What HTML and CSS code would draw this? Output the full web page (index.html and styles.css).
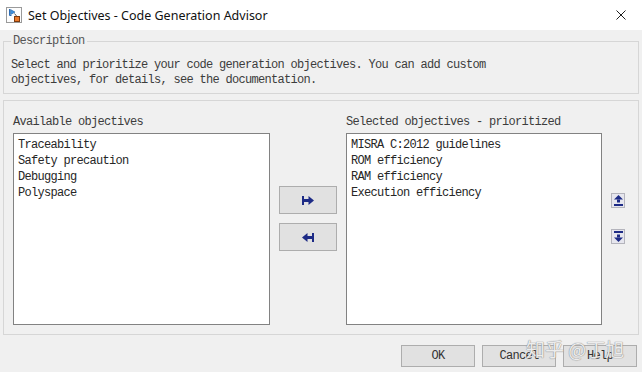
FILE: index.html
```html
<!DOCTYPE html>
<html lang="en">
<head>
  <meta charset="UTF-8" />
  <meta name="viewport" content="width=device-width, initial-scale=1.0"/>
  <title>Set Objectives - Code Generation Advisor</title>
  <link rel="stylesheet" href="styles.css">
</head>
<body>

  <div class="window">
    <div class="titlebar">
      <svg class="app-icon" viewBox="0 0 16 16" width="16" height="16">
        <rect x="0.5" y="0.5" width="15" height="15" fill="#fdfdfd" stroke="#9a9a9a"/>
        <path d="M3.5 2v6.5h2" stroke="#2f6db5" fill="none"/>
        <path d="M4.5 2.5l4.5 2.6-4.5 2.6z" fill="#3d8fdc" stroke="#1f5c9c" stroke-width="0.6"/>
        <path d="M8.5 6.5l2 2.5" stroke="#555" fill="none"/>
        <rect x="8.5" y="9.5" width="5" height="5" fill="#ec7a2a" stroke="#7d3a0e"/>
      </svg>
      <span class="title">Set Objectives - Code Generation Advisor</span>
      <svg class="close" viewBox="0 0 10 10" width="10" height="10">
        <path d="M0.5 0.5l9 9M9.5 0.5l-9 9" stroke="#1e1e1e" stroke-width="1"/>
      </svg>
    </div>

    <div class="content">
      <fieldset class="group desc">
        <legend>Description</legend>
        <p>Select and prioritize your code generation objectives. You can add custom<br>objectives, for details, see the documentation.</p>
      </fieldset>

      <div class="group panel">
        <div class="label">Available objectives</div>
        <div class="label right-label">Selected objectives - prioritized</div>

        <ul class="list">
          <li>Traceability</li>
          <li>Safety precaution</li>
          <li>Debugging</li>
          <li>Polyspace</li>
        </ul>

        <div class="move">
          <button class="btn move-btn">
            <svg viewBox="0 0 12 9" width="12" height="9">
              <rect x="0" y="0" width="2" height="9" fill="#1d2b86"/>
              <rect x="2" y="3" width="5" height="3" fill="#1d2b86"/>
              <path d="M6.5 0L12 4.5 6.5 9z" fill="#1d2b86"/>
            </svg>
          </button>
          <button class="btn move-btn">
            <svg viewBox="0 0 12 9" width="12" height="9">
              <rect x="10" y="0" width="2" height="9" fill="#1d2b86"/>
              <rect x="5" y="3" width="5" height="3" fill="#1d2b86"/>
              <path d="M5.5 0L0 4.5 5.5 9z" fill="#1d2b86"/>
            </svg>
          </button>
        </div>

        <ul class="list">
          <li>MISRA C:2012 guidelines</li>
          <li>ROM efficiency</li>
          <li>RAM efficiency</li>
          <li>Execution efficiency</li>
        </ul>

        <div class="order">
          <button class="btn small">
            <svg viewBox="0 0 9 11" width="9" height="11">
              <path d="M4.5 0L9 4.5H0z" fill="#1d2b86"/>
              <rect x="3" y="4.5" width="3" height="3" fill="#1d2b86"/>
              <rect x="0" y="9" width="9" height="2" fill="#1d2b86"/>
            </svg>
          </button>
          <button class="btn small">
            <svg viewBox="0 0 9 11" width="9" height="11">
              <rect x="0" y="0" width="9" height="2" fill="#1d2b86"/>
              <rect x="3" y="3.5" width="3" height="3" fill="#1d2b86"/>
              <path d="M0 6.5H9L4.5 11z" fill="#1d2b86"/>
            </svg>
          </button>
        </div>
      </div>

      <div class="footer">
        <button class="btn dlg">OK</button>
        <button class="btn dlg">Cancel</button>
        <button class="btn dlg">Help</button>
      </div>
    </div>

    <div class="watermark">知乎 @丁旭</div>
  </div>

</body>
</html>
```

FILE: styles.css
```css
body {
  margin: 0px;
  padding: 0px;
  background: #f0f0f0;
  font-family: 'Liberation Mono', 'DejaVu Sans Mono', monospace;
  font-size: 12px;
  letter-spacing: -0.7px;
  color: #333;
}

.window {
  position: relative;
  width: 642px;
  height: 372px;
  overflow: hidden;
}

/* title bar */
.titlebar {
  height: 30px;
  background: #fff;
  display: flex;
  align-items: center;
  padding-left: 6px;
}

.app-icon {
  margin-right: 6px;
}

.title {
  font-family: 'Noto Sans', sans-serif;
  font-size: 12.5px;
  letter-spacing: 0;
  color: #111;
}

.close {
  margin-left: auto;
  margin-right: 16px;
}

.content {
  padding: 0 3px;
}

/* group boxes */
.group {
  border: 1px solid #d6d6d6;
  margin: 0;
}

.desc {
  margin-top: 4px;
  padding: 10px 7px 5px 7px;
}

.desc legend {
  padding: 0 2px;
  line-height: 14px;
  color: #555;
}

.desc p {
  margin: 0;
  line-height: 15px;
  color: #3c3c3c;
}

.panel {
  margin-top: 6px;
  padding: 13px 9px 9px 9px;
  display: grid;
  grid-template-columns: 257px 58px 256px 14px;
  grid-template-rows: 16px 192px;
  column-gap: 9px;
  row-gap: 3px;
}

.label {
  line-height: 16px;
  color: #3c3c3c;
}

.right-label {
  grid-column: 3 / 5;
}

.list {
  margin: 0;
  padding: 3px 4px 0 4px;
  list-style: none;
  background: #fff;
  border: 1px solid #828282;
  box-sizing: border-box;
  height: 192px;
}

.list li {
  line-height: 16px;
  color: #262626;
}

/* buttons */
.btn {
  background: #e1e1e1;
  border: 1px solid #adadad;
  box-sizing: border-box;
  padding: 0;
  font-family: inherit;
  font-size: 12px;
  letter-spacing: -0.7px;
  color: #333;
  display: flex;
  align-items: center;
  justify-content: center;
}

.move {
  padding-top: 53px;
  display: flex;
  flex-direction: column;
  gap: 9px;
}

.move-btn {
  width: 58px;
  height: 28px;
}

.order {
  padding-top: 60px;
  display: flex;
  flex-direction: column;
  gap: 21px;
}

.btn.small {
  width: 14px;
  height: 15px;
  background: #e6e6ee;
  border-color: #b4b4bc;
}

.footer {
  display: flex;
  justify-content: flex-end;
  gap: 7px;
  margin-top: 10px;
  margin-right: 2px;
}

.btn.dlg {
  width: 74px;
  height: 22px;
}

.watermark {
  position: absolute;
  left: 526px;
  top: 335px;
  font-family: 'Noto Sans CJK SC', sans-serif;
  font-size: 19px;
  letter-spacing: 0;
  color: rgba(255, 255, 255, 0.85);
  text-shadow: 0 0 1px #8a8a8a, 0 0 1px #8a8a8a;
}
```
